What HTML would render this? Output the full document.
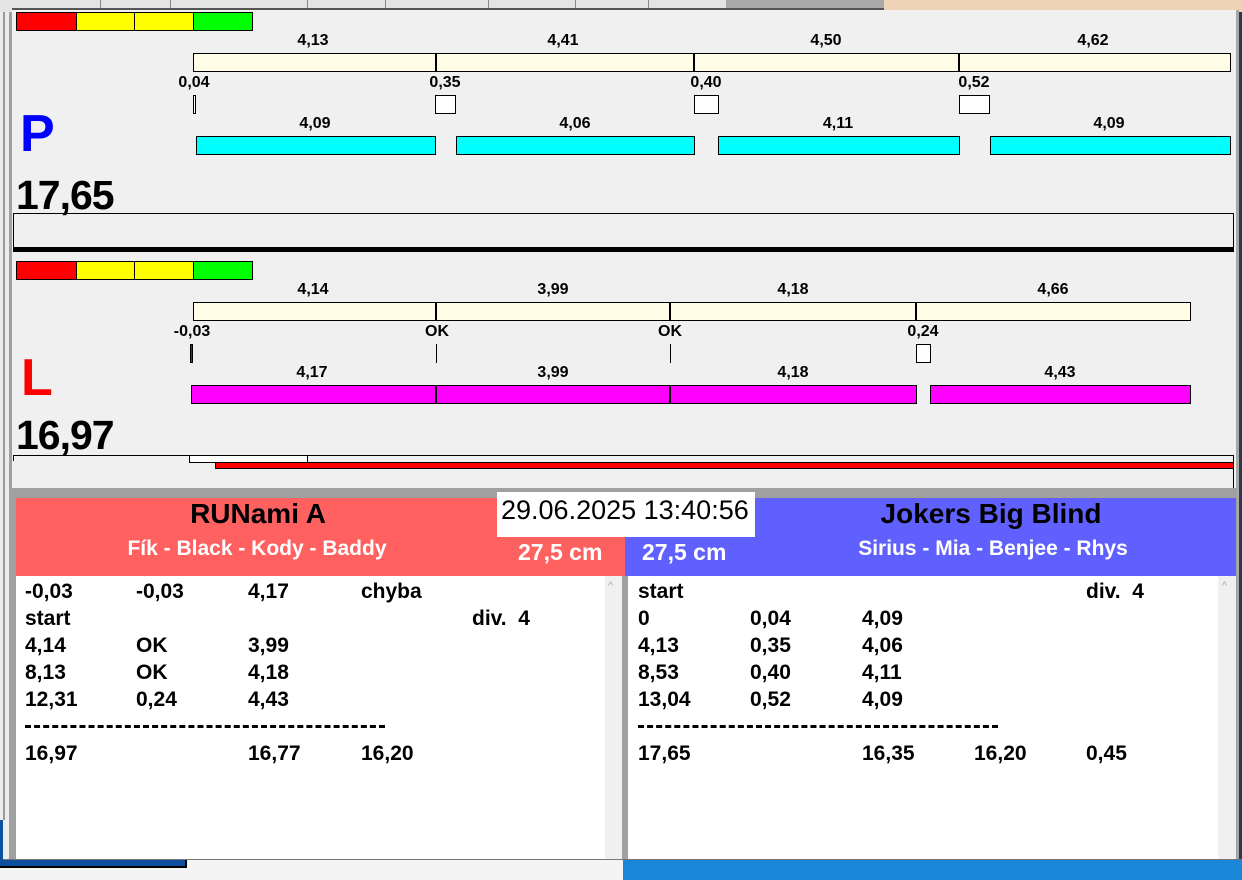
<!DOCTYPE html>
<html><head><meta charset="utf-8"><style>
*{margin:0;padding:0;box-sizing:border-box}
body{width:1242px;height:880px;position:relative;overflow:hidden;background:#fff;font-family:"Liberation Sans",Arial,sans-serif}
div{position:absolute}
.b{border:1px solid #000}
.lbl{font-size:16px;font-weight:bold;line-height:16px;transform:translateX(-50%);white-space:nowrap;color:#000}
.t{font-size:21px;font-weight:bold;line-height:21px;white-space:nowrap;color:#000}
.vy{background:#fffde6}
.cy{background:#00ffff}
.mg{background:#ff00ff}
</style></head><body>
<div style="left:0;top:0;width:1242px;height:12px;background:#e4e4e4"></div>
<div style="left:726px;top:0;width:158px;height:9px;background:#a9a9a9"></div>
<div style="left:884px;top:0;width:358px;height:12px;background:#efd3b7"></div>
<div style="left:12px;top:8px;width:872px;height:2px;background:#555"></div>
<div style="left:100px;top:0;width:1px;height:8px;background:#888"></div>
<div style="left:170px;top:0;width:1px;height:8px;background:#888"></div>
<div style="left:307px;top:0;width:1px;height:8px;background:#888"></div>
<div style="left:385px;top:0;width:1px;height:8px;background:#888"></div>
<div style="left:488px;top:0;width:1px;height:8px;background:#888"></div>
<div style="left:575px;top:0;width:1px;height:8px;background:#888"></div>
<div style="left:648px;top:0;width:1px;height:8px;background:#888"></div>
<div style="left:0;top:12px;width:12px;height:848px;background:#ececec"></div>
<div style="left:3px;top:12px;width:2px;height:808px;background:#999"></div>
<div style="left:9px;top:12px;width:3px;height:848px;background:#a0a0a0"></div>
<div style="left:12px;top:10px;width:1224px;height:478px;background:#f0f0f0"></div>
<div style="left:1236px;top:10px;width:3px;height:850px;background:#a8a8a8"></div>
<div style="left:1239px;top:12px;width:3px;height:848px;background:#2a3a4a"></div>

<div class="b" style="left:16px;top:12px;width:61px;height:19px;background:#f00"></div>
<div class="b" style="left:76px;top:12px;width:59px;height:19px;background:#ff0"></div>
<div class="b" style="left:134px;top:12px;width:60px;height:19px;background:#ff0"></div>
<div class="b" style="left:193px;top:12px;width:60px;height:19px;background:#0f0"></div>

<div class="lbl" style="left:313px;top:33px">4,13</div>
<div class="lbl" style="left:563px;top:33px">4,41</div>
<div class="lbl" style="left:826px;top:33px">4,50</div>
<div class="lbl" style="left:1093px;top:33px">4,62</div>
<div class="b vy" style="left:193px;top:53px;width:1038px;height:19px"></div>
<div style="left:435px;top:53px;width:2px;height:19px;background:#000"></div>
<div style="left:693px;top:53px;width:2px;height:19px;background:#000"></div>
<div style="left:958px;top:53px;width:2px;height:19px;background:#000"></div>

<div class="lbl" style="left:194px;top:75px">0,04</div>
<div class="lbl" style="left:445px;top:75px">0,35</div>
<div class="lbl" style="left:706px;top:75px">0,40</div>
<div class="lbl" style="left:974px;top:75px">0,52</div>
<div class="b" style="left:193px;top:95px;width:3px;height:19px;background:#fff"></div>
<div class="b" style="left:435px;top:95px;width:21px;height:19px;background:#fff"></div>
<div class="b" style="left:694px;top:95px;width:25px;height:19px;background:#fff"></div>
<div class="b" style="left:959px;top:95px;width:31px;height:19px;background:#fff"></div>

<div style="left:20px;top:108px;font-size:52px;font-weight:bold;line-height:52px;color:#0000ff">P</div>
<div class="lbl" style="left:315px;top:116px">4,09</div>
<div class="lbl" style="left:575px;top:116px">4,06</div>
<div class="lbl" style="left:838px;top:116px">4,11</div>
<div class="lbl" style="left:1109px;top:116px">4,09</div>
<div class="b cy" style="left:196px;top:136px;width:240px;height:19px"></div>
<div class="b cy" style="left:456px;top:136px;width:239px;height:19px"></div>
<div class="b cy" style="left:718px;top:136px;width:242px;height:19px"></div>
<div class="b cy" style="left:990px;top:136px;width:241px;height:19px"></div>

<div style="left:16px;top:175px;font-size:41px;font-weight:bold;line-height:41px;letter-spacing:-1px;color:#000">17,65</div>
<div style="left:13px;top:213px;width:1221px;height:35px;border:1px solid #000;border-bottom:none"></div>
<div style="left:13px;top:247px;width:1221px;height:5px;background:#000"></div>

<div class="b" style="left:16px;top:261px;width:61px;height:19px;background:#f00"></div>
<div class="b" style="left:76px;top:261px;width:59px;height:19px;background:#ff0"></div>
<div class="b" style="left:134px;top:261px;width:60px;height:19px;background:#ff0"></div>
<div class="b" style="left:193px;top:261px;width:60px;height:19px;background:#0f0"></div>

<div class="lbl" style="left:313px;top:282px">4,14</div>
<div class="lbl" style="left:553px;top:282px">3,99</div>
<div class="lbl" style="left:793px;top:282px">4,18</div>
<div class="lbl" style="left:1053px;top:282px">4,66</div>
<div class="b vy" style="left:193px;top:302px;width:998px;height:19px"></div>
<div style="left:435px;top:302px;width:2px;height:19px;background:#000"></div>
<div style="left:669px;top:302px;width:2px;height:19px;background:#000"></div>
<div style="left:915px;top:302px;width:2px;height:19px;background:#000"></div>

<div class="lbl" style="left:192px;top:324px">-0,03</div>
<div class="lbl" style="left:437px;top:324px">OK</div>
<div class="lbl" style="left:670px;top:324px">OK</div>
<div class="lbl" style="left:923px;top:324px">0,24</div>
<div class="b" style="left:190px;top:344px;width:3px;height:19px;background:#c00000"></div>
<div style="left:436px;top:344px;width:1px;height:19px;background:#000"></div>
<div style="left:670px;top:344px;width:1px;height:19px;background:#000"></div>
<div class="b" style="left:916px;top:344px;width:15px;height:19px;background:#fff"></div>

<div style="left:21px;top:352px;font-size:52px;font-weight:bold;line-height:52px;color:#ff0000">L</div>
<div class="lbl" style="left:312px;top:365px">4,17</div>
<div class="lbl" style="left:553px;top:365px">3,99</div>
<div class="lbl" style="left:793px;top:365px">4,18</div>
<div class="lbl" style="left:1060px;top:365px">4,43</div>
<div class="b mg" style="left:191px;top:385px;width:726px;height:19px"></div>
<div style="left:435px;top:385px;width:2px;height:19px;background:#000"></div>
<div style="left:669px;top:385px;width:2px;height:19px;background:#000"></div>
<div class="b mg" style="left:930px;top:385px;width:261px;height:19px"></div>

<div style="left:16px;top:415px;font-size:41px;font-weight:bold;line-height:41px;letter-spacing:-1px;color:#000">16,97</div>
<div style="left:13px;top:455px;width:1221px;height:33px;border:1px solid #000;border-bottom:none;border-left:none"></div>
<div style="left:13px;top:455px;width:1px;height:6px;background:#000"></div>
<div class="b" style="left:189px;top:455px;width:119px;height:8px;background:#fff"></div>
<div class="b" style="left:215px;top:462px;width:1019px;height:7px;background:#f00"></div>

<div style="left:12px;top:488px;width:1225px;height:372px;background:#a0a0a0"></div>
<div style="left:16px;top:498px;width:609px;height:78px;background:#ff6060"></div>
<div style="left:625px;top:498px;width:611px;height:78px;background:#6060ff"></div>
<div style="left:497px;top:492px;width:258px;height:45px;background:#fff"></div>
<div style="left:501px;top:495px;font-size:27px;line-height:30px;color:#000;white-space:nowrap">29.06.2025 13:40:56</div>

<div style="left:258px;top:499px;transform:translateX(-50%);font-size:28px;font-weight:bold;line-height:30px;white-space:nowrap">RUNami A</div>
<div style="left:257px;top:537px;transform:translateX(-50%);font-size:21px;font-weight:bold;line-height:24px;color:#fff;white-space:nowrap">Fík - Black - Kody - Baddy</div>
<div style="left:518px;top:540px;font-size:23px;font-weight:bold;line-height:25px;color:#fff;white-space:nowrap">27,5 cm</div>
<div style="left:991px;top:499px;transform:translateX(-50%);font-size:28px;font-weight:bold;line-height:30px;white-space:nowrap">Jokers Big Blind</div>
<div style="left:993px;top:537px;transform:translateX(-50%);font-size:21px;font-weight:bold;line-height:24px;color:#fff;white-space:nowrap">Sirius - Mia - Benjee - Rhys</div>
<div style="left:642px;top:540px;font-size:23px;font-weight:bold;line-height:25px;color:#fff;white-space:nowrap">27,5 cm</div>

<div style="left:16px;top:576px;width:590px;height:283px;background:#fff"></div>
<div style="left:605px;top:576px;width:17px;height:283px;background:#f0f0f0"></div>
<div style="left:608px;top:580px;font-size:11px;color:#aaa">^</div>
<div style="left:628px;top:576px;width:591px;height:283px;background:#fff"></div>
<div style="left:1218px;top:576px;width:18px;height:283px;background:#f0f0f0"></div>
<div style="left:1222px;top:580px;font-size:11px;color:#aaa">^</div>

<div class="t" style="left:25px;top:581px">-0,03</div>
<div class="t" style="left:136px;top:581px">-0,03</div>
<div class="t" style="left:248px;top:581px">4,17</div>
<div class="t" style="left:361px;top:581px">chyba</div>
<div class="t" style="left:25px;top:608px">start</div>
<div class="t" style="left:472px;top:608px">div.&nbsp; 4</div>
<div class="t" style="left:25px;top:635px">4,14</div>
<div class="t" style="left:136px;top:635px">OK</div>
<div class="t" style="left:248px;top:635px">3,99</div>
<div class="t" style="left:25px;top:662px">8,13</div>
<div class="t" style="left:136px;top:662px">OK</div>
<div class="t" style="left:248px;top:662px">4,18</div>
<div class="t" style="left:25px;top:689px">12,31</div>
<div class="t" style="left:136px;top:689px">0,24</div>
<div class="t" style="left:248px;top:689px">4,43</div>
<div style="left:25px;top:725px;width:360px;height:0;border-top:3px dashed #000"></div>
<div class="t" style="left:25px;top:743px">16,97</div>
<div class="t" style="left:248px;top:743px">16,77</div>
<div class="t" style="left:361px;top:743px">16,20</div>

<div class="t" style="left:638px;top:581px">start</div>
<div class="t" style="left:1086px;top:581px">div.&nbsp; 4</div>
<div class="t" style="left:638px;top:608px">0</div>
<div class="t" style="left:750px;top:608px">0,04</div>
<div class="t" style="left:862px;top:608px">4,09</div>
<div class="t" style="left:638px;top:635px">4,13</div>
<div class="t" style="left:750px;top:635px">0,35</div>
<div class="t" style="left:862px;top:635px">4,06</div>
<div class="t" style="left:638px;top:662px">8,53</div>
<div class="t" style="left:750px;top:662px">0,40</div>
<div class="t" style="left:862px;top:662px">4,11</div>
<div class="t" style="left:638px;top:689px">13,04</div>
<div class="t" style="left:750px;top:689px">0,52</div>
<div class="t" style="left:862px;top:689px">4,09</div>
<div style="left:638px;top:725px;width:360px;height:0;border-top:3px dashed #000"></div>
<div class="t" style="left:638px;top:743px">17,65</div>
<div class="t" style="left:862px;top:743px">16,35</div>
<div class="t" style="left:974px;top:743px">16,20</div>
<div class="t" style="left:1086px;top:743px">0,45</div>

<div style="left:0;top:859px;width:1242px;height:1px;background:#777"></div>
<div style="left:0;top:860px;width:623px;height:20px;background:#f4f4f4"></div>
<div style="left:0;top:860px;width:187px;height:8px;background:#0d4f9e;border-bottom:2px solid #000;border-right:2px solid #000"></div>
<div style="left:0;top:820px;width:3px;height:40px;background:#0d4f9e"></div>
<div style="left:623px;top:860px;width:619px;height:20px;background:#1a86d8"></div>
</body></html>
